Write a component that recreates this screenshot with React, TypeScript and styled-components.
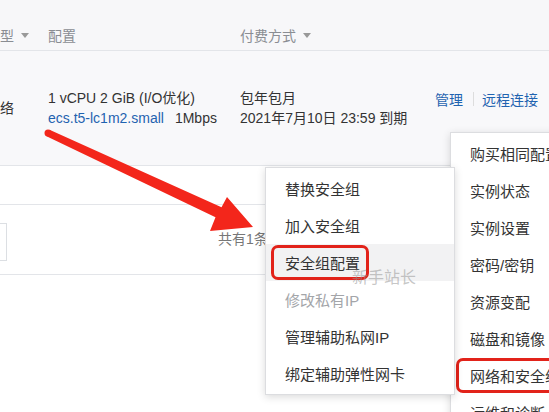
import React from "react";
import styled, { createGlobalStyle } from "styled-components";

const GlobalStyle = createGlobalStyle`
  html, body {
    margin: 0;
    padding: 0;
    background: #ffffff;
  }
  body {
    font-family: "Liberation Sans", "Noto Sans CJK SC", sans-serif;
    color: #333;
  }
`;

const Page = styled.div`
  position: relative;
  width: 549px;
  height: 412px;
  overflow: hidden;
  background: #fff;
`;

const Row = styled.div<{ $height: number; $bg?: string }>`
  display: grid;
  grid-template-columns: 48px 192px 195px 1fr;
  align-items: center;
  height: ${(p) => p.$height}px;
  background: ${(p) => p.$bg || "#fff"};
  border-bottom: 1px solid #e3e5e9;
  box-sizing: border-box;
`;

const HeadCell = styled.div`
  font-size: 14px;
  color: #8a8d93;
  display: flex;
  align-items: center;
  gap: 7px;
  padding-top: 20px;
`;

const Caret = styled.span`
  width: 0;
  height: 0;
  border-left: 4px solid transparent;
  border-right: 4px solid transparent;
  border-top: 5px solid #999;
`;

const Cell = styled.div`
  font-size: 14px;
  line-height: 20px;
  color: #333;
  white-space: nowrap;
`;

const Link = styled.span`
  color: #1f63b0;
`;

const Spec = styled.span`
  margin-left: 11px;
`;

const Actions = styled.div`
  display: flex;
  align-items: center;
  font-size: 14px;
  white-space: nowrap;
  margin-top: -18px;
`;

const Divider = styled.span`
  width: 1px;
  height: 14px;
  background: #ddd;
  margin: 0 8px 0 10px;
`;

const Spacer = styled.div`
  height: 38px;
  border-bottom: 1px solid #e3e5e9;
`;

const Footer = styled.div`
  height: 69px;
  display: flex;
  align-items: center;
  border-bottom: 1px solid #e3e5e9;
`;

const PageInput = styled.div`
  width: 107px;
  height: 38px;
  margin-left: -100px;
  border: 1px solid #dcdfe3;
  box-sizing: border-box;
  margin-top: 4px;
`;

const Total = styled.span`
  margin-left: 211px;
  font-size: 14px;
  color: #777;
  margin-top: -4px;
`;

const Menu = styled.div<{ $left: number; $top: number; $width: number }>`
  position: absolute;
  left: ${(p) => p.$left}px;
  top: ${(p) => p.$top}px;
  width: ${(p) => p.$width}px;
  padding: 2px 0;
  background: #fff;
  border: 1px solid #dcdde0;
  box-shadow: 0 2px 8px rgba(0, 0, 0, 0.15);
  box-sizing: border-box;
`;

const Item = styled.div<{ $active?: boolean; $disabled?: boolean }>`
  height: 37px;
  display: flex;
  align-items: center;
  padding-left: 19px;
  font-size: 15px;
  white-space: nowrap;
  color: ${(p) => (p.$disabled ? "#a3a5a9" : "#333")};
  background: ${(p) => (p.$active ? "#f2f2f3" : "transparent")};
`;

const Mark = styled.span`
  display: inline-flex;
  align-items: center;
  height: 35px;
  margin-left: -14px;
  padding: 0 6px 0 11px;
  border: 3px solid #e2231a;
  border-radius: 7px;
  box-sizing: border-box;
`;

const Watermark = styled.div`
  position: absolute;
  left: 352px;
  top: 264px;
  font-size: 16px;
  color: rgba(150, 150, 150, 0.55);
  pointer-events: none;
`;

const ArrowLayer = styled.svg`
  position: absolute;
  left: 0;
  top: 0;
  pointer-events: none;
`;

const mainMenu = [
  "购买相同配置",
  "实例状态",
  "实例设置",
  "密码/密钥",
  "资源变配",
  "磁盘和镜像",
  "网络和安全组",
  "运维和诊断",
];

const subMenu = [
  { label: "替换安全组" },
  { label: "加入安全组" },
  { label: "安全组配置", active: true },
  { label: "修改私有IP", disabled: true },
  { label: "管理辅助私网IP" },
  { label: "绑定辅助弹性网卡" },
];

export default function App() {
  return (
    <Page>
      <GlobalStyle />
      <Row $height={51} $bg="#f7f7f9">
        <HeadCell>
          型 <Caret />
        </HeadCell>
        <HeadCell>配置</HeadCell>
        <HeadCell>
          付费方式 <Caret />
        </HeadCell>
        <HeadCell />
      </Row>
      <Row $height={115} $bg="#f8f8fa">
        <Cell>络</Cell>
        <Cell>
          1 vCPU 2 GiB (I/O优化)
          <br />
          <Link>ecs.t5-lc1m2.small</Link>
          <Spec>1Mbps</Spec>
        </Cell>
        <Cell>
          包年包月
          <br />
          2021年7月10日 23:59 到期
        </Cell>
        <Actions>
          <Link>管理</Link>
          <Divider />
          <Link>远程连接</Link>
        </Actions>
      </Row>
      <Spacer />
      <Footer>
        <PageInput />
        <Total>共有1条</Total>
      </Footer>

      <Menu $left={450} $top={132} $width={130}>
        {mainMenu.map((label) => (
          <Item key={label}>
            {label === "网络和安全组" ? <Mark>{label}</Mark> : label}
          </Item>
        ))}
      </Menu>

      <Menu $left={265} $top={167} $width={190}>
        {subMenu.map((m) => (
          <Item key={m.label} $active={m.active} $disabled={m.disabled}>
            {m.active ? <Mark>{m.label}</Mark> : m.label}
          </Item>
        ))}
      </Menu>

      <Watermark>新手站长</Watermark>

      <ArrowLayer width="549" height="412" viewBox="0 0 549 412">
        <circle cx="48" cy="133" r="3.5" fill="#f3261b" />
        <polygon
          fill="#f3261b"
          points="49.5,129.8 221.5,207.3 227,197 253,227 210,231 215.5,217.3 46.5,136.2"
        />
      </ArrowLayer>
    </Page>
  );
}
